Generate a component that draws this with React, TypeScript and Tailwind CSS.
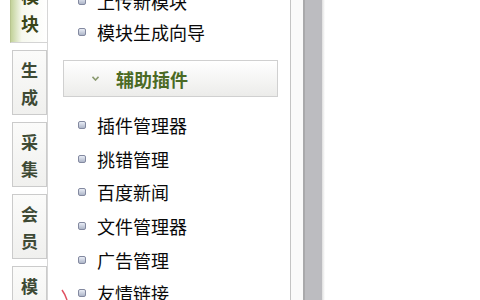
import React from 'react';

const font = { fontFamily: '"Noto Sans CJK SC", "Noto Sans", sans-serif' };

const topItems = ['上传新模块', '模块生成向导'];
const pluginItems = ['插件管理器', '挑错管理', '百度新闻', '文件管理器', '广告管理', '友情链接'];
const tabs = [['生', '成'], ['采', '集'], ['会', '员'], ['模', '板']];

const Bullet: React.FC = () => (
  <span className="w-[8px] h-[8px] rounded-[2px] border border-[#8389a0] bg-gradient-to-b from-[#e9edf6] to-[#aeb6c8] shrink-0" />
);

const MenuItem: React.FC<{ label: string; h: string }> = ({ label, h }) => (
  <div className={`flex items-center pl-[30px] gap-[11px] ${h}`}>
    <Bullet />
    <span className="text-[18px] leading-none text-[#0a0a0a] whitespace-nowrap">{label}</span>
  </div>
);

const App: React.FC = () => {
  return (
    <div className="w-[480px] h-[300px] overflow-hidden bg-white flex" style={font}>
      {/* side tabs */}
      <div className="w-[37px] ml-[10px] shrink-0">
        <div className="h-[43px] overflow-hidden bg-gradient-to-r from-[#c3d29a] via-[#f6f8ee] via-30% to-white border-l border-[#b7c48f] border-b border-b-[#d4d4d4] flex flex-col items-center">
          <div className="mt-[-19px] flex flex-col items-center pl-[2px] shrink-0">
            <span className="text-[18px] font-bold leading-[28px] text-[#3b4619]">模</span>
            <span className="text-[18px] font-bold leading-[28px] text-[#3b4619]">块</span>
          </div>
        </div>
        {tabs.map((t) => (
          <div
            key={t.join('')}
            className="mt-[7px] ml-[2px] h-[65px] border border-[#cbcbcb] bg-gradient-to-b from-[#fbfbfa] to-[#f0f0ee] flex flex-col items-center justify-center"
          >
            {t.map((c) => (
              <span key={c} className="text-[17px] font-bold leading-[27px] text-[#3e4a35]">{c}</span>
            ))}
          </div>
        ))}
      </div>

      {/* menu panel */}
      <div className="relative w-[243px] shrink-0 border-l border-[#d6d6d6]">
        <div className="mt-[-15px]">
          {topItems.map((l) => (
            <MenuItem key={l} label={l} h="h-[31px]" />
          ))}
        </div>
        <div className="mt-[13px] ml-[15px] mr-[12px] h-[37px] border border-[#d0d0d0] bg-gradient-to-b from-white to-[#ececea] flex items-center">
          <svg className="ml-[28px]" width="7" height="5" viewBox="0 0 7 5">
            <path d="M0.5 0.8 L3.5 4 L6.5 0.8" stroke="#8a9a70" strokeWidth="1.6" fill="none" />
          </svg>
          <span className="ml-[17px] text-[18px] font-bold leading-none text-[#4b6a24]">辅助插件</span>
        </div>
        <div className="mt-[11px]">
          {pluginItems.map((l) => (
            <MenuItem key={l} label={l} h="h-[33.7px]" />
          ))}
        </div>
        <svg className="absolute left-[13px] top-[289px]" width="8" height="12" viewBox="0 0 8 12">
          <path d="M1 1 Q4 5 6 11" stroke="#e05060" strokeWidth="1.5" fill="none" />
        </svg>
      </div>

      {/* scrollbar / splitter */}
      <div className="w-[1px] bg-[#c4c4c4] shrink-0" />
      <div className="w-[12px] bg-[#fafafa] shrink-0" />
      <div className="w-[2px] bg-[#a9a9ab] shrink-0" />
      <div className="w-[17px] bg-[#bcbcc0] shrink-0" />
      <div className="w-[3px] bg-gradient-to-r from-[#dedede] to-white shrink-0" />
      <div className="flex-1 bg-white" />
    </div>
  );
};

export default App;
